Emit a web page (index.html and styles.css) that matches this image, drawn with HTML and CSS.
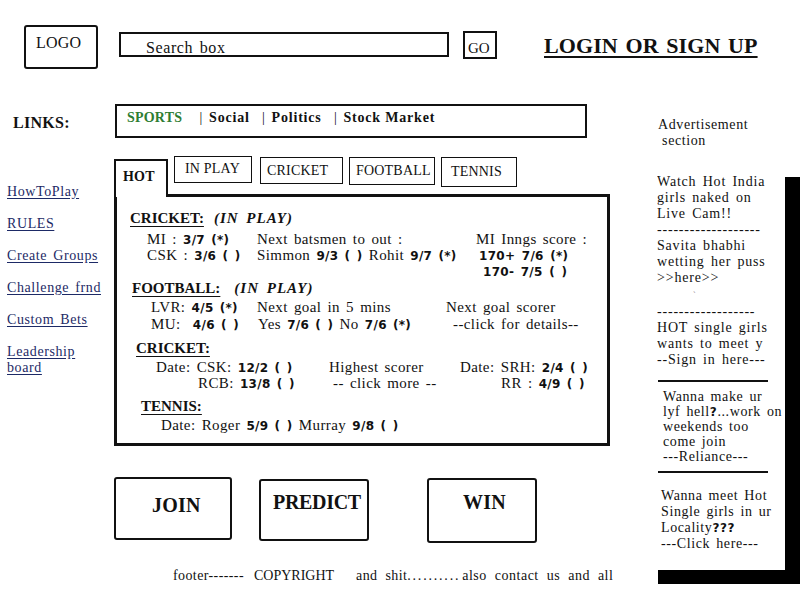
FILE: index.html
```html
<!DOCTYPE html>
<html>
<head>
<meta charset="utf-8">
<link rel="stylesheet" href="styles.css">
</head>
<body>
<header class="header">
  <div class="logo">LOGO</div>
  <div class="search">Search box</div>
  <div class="go">GO</div>
  <a class="login">LOGIN OR SIGN UP</a>
</header>

<div class="layout">
  <aside class="left">
    <div class="links-label">LINKS:</div>
    <nav class="side-links">
      <a>HowToPlay</a>
      <a>RULES</a>
      <a>Create Groups</a>
      <a>Challenge frnd</a>
      <a>Custom Bets</a>
      <a>Leadership<br>board</a>
    </nav>
  </aside>

  <main class="center">
    <div class="topnav">
      <span class="active">SPORTS</span>
      <span class="sep">|</span><span>Social</span>
      <span class="sep">|</span><span>Politics</span>
      <span class="sep">|</span><span>Stock Market</span>
    </div>

    <div class="tabs">
      <div class="tab tab-hot">HOT</div>
      <div class="tab tab-inplay">IN PLAY</div>
      <div class="tab tab-cricket">CRICKET</div>
      <div class="tab tab-football">FOOTBALL</div>
      <div class="tab tab-tennis">TENNIS</div>
    </div>

    <div class="board">
      <h3 class="sec-title t1"><span class="u">CRICKET:</span><em>(IN PLAY)</em></h3>
      <div class="grid g1">
        <span>MI : <b>3/7</b> <b>(*)</b></span>
        <span>Next batsmen to out :</span>
        <span>MI Inngs score :</span>
        <span>CSK : <b>3/6</b> <b>( )</b></span>
        <span>Simmon <b>9/3</b> <b>( )</b> Rohit <b>9/7</b> <b>(*)</b></span>
        <span class="i3"><b>170+ 7/6 (*)</b></span>
        <span></span>
        <span></span>
        <span class="i7"><b>170- 7/5 ( )</b></span>
      </div>

      <h3 class="sec-title t2"><span class="u">FOOTBALL:</span><em>(IN PLAY)</em></h3>
      <div class="grid g2">
        <span>LVR: <b>4/5</b> <b>(*)</b></span>
        <span>Next goal in 5 mins</span>
        <span>Next goal scorer</span>
        <span>MU:&nbsp; <b>4/6</b> <b>( )</b></span>
        <span class="i1">Yes <b>7/6</b> <b>( )</b> No <b>7/6</b> <b>(*)</b></span>
        <span class="i7">--click for details--</span>
      </div>

      <h3 class="sec-title t3"><span class="u">CRICKET:</span></h3>
      <div class="grid g3">
        <span>Date: CSK: <b>12/2</b> <b>( )</b></span>
        <span>Highest scorer</span>
        <span>Date: SRH: <b>2/4</b> <b>( )</b></span>
        <span class="i42">RCB: <b>13/8</b> <b>( )</b></span>
        <span class="i4">-- click more --</span>
        <span class="i41">RR : <b>4/9</b> <b>( )</b></span>
      </div>

      <h3 class="sec-title t4"><span class="u">TENNIS:</span></h3>
      <div class="row-tennis">Date: Roger <b>5/9</b> <b>( )</b> Murray <b>9/8</b> <b>( )</b></div>
    </div>

    <div class="actions">
      <div class="btn btn-join">JOIN</div>
      <div class="btn btn-predict">PREDICT</div>
      <div class="btn btn-win">WIN</div>
    </div>

    <footer class="footer"><span class="f1">footer-------</span><span class="f2">COPYRIGHT</span><span class="f3">and shit<span class="dots">..........</span></span><span class="f4">also contact us and all</span></footer>
  </main>

  <aside class="right">
    <div class="ad-title">Advertisement<br>&nbsp;section</div>
    <div class="ad-box">
      <div class="ad-block b1">
        Watch Hot India<br>
        girls naked on<br>
        Live Cam!!<br>
        -------------------<br>
        Savita bhabhi<br>
        wetting her puss<br>
        &gt;&gt;here&gt;&gt;<br>
        <span class="speck">`</span><br>
        ------------------<br>
        HOT single girls<br>
        wants to meet y<br>
        --Sign in here---
      </div>
      <hr class="ad-rule r1">
      <div class="ad-block b2">
        Wanna make ur<br>
        lyf hell<b>?</b>...work on<br>
        weekends too<br>
        come join<br>
        ---Reliance---
      </div>
      <hr class="ad-rule r2">
      <div class="ad-block b3">
        Wanna meet Hot<br>
        Single girls in ur<br>
        Locality<b>???</b><br>
        ---Click here---
      </div>
    </div>
  </aside>
</div>
</body>
</html>
```

FILE: styles.css
```css
* { box-sizing: border-box; }

html, body {
  margin: 0;
  padding: 0;
  background: #fff;
}

body {
  width: 800px;
  height: 600px;
  overflow: hidden;
  font-family: "Liberation Serif", "Times New Roman", serif;
  font-size: 14px;
  color: #111;
}

/* ---------- header ---------- */
.header {
  display: flex;
  align-items: flex-start;
  padding: 25px 0 0 24px;
  height: 104px;
}

.logo {
  width: 74px;
  height: 44px;
  border: 2px solid #111;
  border-radius: 3px;
  padding: 7px 0 0 10px;
  font-size: 16px;
  letter-spacing: 0.2px;
}

.search {
  margin: 7px 0 0 21px;
  width: 330px;
  height: 25px;
  border: 2px solid #111;
  padding: 5px 0 0 25px;
  font-size: 16px;
  line-height: 18px;
  letter-spacing: 0.6px;
  word-spacing: 2px;
}

.go {
  margin: 6px 0 0 14px;
  width: 34px;
  height: 28px;
  border: 2px solid #111;
  padding: 7px 0 0 3px;
  font-size: 15px;
  line-height: 16px;
}

.login {
  margin: 9px 0 0 47px;
  font-weight: bold;
  font-size: 22px;
  line-height: 24px;
  text-decoration: underline;
  text-decoration-thickness: 2px;
  text-underline-offset: 3px;
  letter-spacing: 0.1px;
  word-spacing: 2px;
  color: #111;
}

/* ---------- layout ---------- */
.layout {
  display: grid;
  grid-template-columns: 114px 529px 1fr;
}

/* ---------- left ---------- */
.left {
  padding-top: 11px;
}

.links-label {
  padding-left: 13px;
  font-weight: bold;
  font-size: 16px;
  line-height: 16px;
  letter-spacing: 0.3px;
}

.side-links {
  display: flex;
  flex-direction: column;
  gap: 16px;
  margin-top: 53px;
  padding-left: 7px;
}

.side-links a {
  color: #1d2a66;
  text-decoration: underline;
  text-underline-offset: 2px;
  font-size: 14px;
  line-height: 16px;
  letter-spacing: 0.6px;
  word-spacing: 2px;
}

/* ---------- center ---------- */
.center {
  display: flex;
  flex-direction: column;
  align-items: flex-start;
}

.topnav {
  margin-left: 1px;
  width: 472px;
  height: 34px;
  border: 2px solid #111;
  padding: 4px 0 0 10px;
  font-weight: bold;
  font-size: 14px;
  line-height: 16px;
  letter-spacing: 0.8px;
  white-space: nowrap;
}

.topnav .active { color: #2e7d32; margin-right: 5px; letter-spacing: 0.2px; }
.topnav .sep { margin: 0 6px 0 8px; font-weight: normal; }

.tabs {
  display: flex;
  align-items: flex-start;
  margin-top: 18px;
}

.tab {
  border: 1px solid #111;
  font-size: 14px;
  line-height: 16px;
  letter-spacing: 0.2px;
  background: #fff;
}

.tab-hot {
  position: relative;
  z-index: 1;
  margin-top: 3px;
  margin-bottom: -3px;
  width: 54px;
  height: 38px;
  border: 2px solid #111;
  border-bottom: none;
  padding: 8px 0 0 7px;
  font-weight: bold;
}

.tab-inplay { margin-left: 6px; width: 78px; height: 27px; padding: 4px 0 0 10px; }
.tab-cricket { margin-left: 8px; margin-top: 1px; width: 83px; height: 27px; padding: 5px 0 0 6px; }
.tab-football { margin-left: 6px; margin-top: 1px; width: 86px; height: 28px; padding: 5px 0 0 6px; }
.tab-tennis { margin-left: 6px; margin-top: 1px; width: 76px; height: 30px; padding: 6px 0 0 9px; }

.board {
  width: 496px;
  height: 252px;
  border: 3px solid #111;
  font-size: 15px;
  line-height: 16px;
  letter-spacing: 0.4px;
  word-spacing: 2px;
}

.board b {
  font-family: "DejaVu Sans", sans-serif;
  font-weight: bold;
  font-size: 12px;
  line-height: 12px;
  letter-spacing: 0.3px;
}

.sec-title {
  margin: 0;
  height: 16px;
  font-size: 15px;
  line-height: 16px;
  font-weight: bold;
  letter-spacing: 0;
}

.sec-title .u {
  text-decoration: underline;
  text-decoration-thickness: 1px;
  text-underline-offset: 3px;
}

.sec-title em {
  margin-left: 10px;
  font-style: italic;
  letter-spacing: 1px;
  word-spacing: 3px;
}

.t1 { margin-top: 13px; padding-left: 13px; }
.t2 { margin-top: 1px; padding-left: 15px; }
.t2 em { margin-left: 14px; }
.t3 { margin-top: 9px; padding-left: 19px; }
.t4 { margin-top: 7px; padding-left: 24px; }

.grid {
  display: grid;
  grid-auto-rows: 16px;
  margin-top: 5px;
  white-space: nowrap;
}

.g1 { padding-left: 30px; grid-template-columns: 110px 219px auto; }
.g2 { margin-top: 3px; padding-left: 34px; grid-template-columns: 106px 189px auto; }
.g2 > span:nth-child(n+4) { padding-top: 1px; }
.g3 { margin-top: 3px; padding-left: 39px; grid-template-columns: 173px 131px auto; }

.i1 { padding-left: 1px; }
.i3 { padding-left: 3px; }
.i4 { padding-left: 4px; }
.i7 { padding-left: 7px; }
.i41 { padding-left: 41px; }
.i42 { padding-left: 42px; }

.row-tennis {
  height: 16px;
  margin-top: 3px;
  padding-left: 44px;
  white-space: nowrap;
}

.actions {
  display: flex;
  align-items: flex-start;
  margin-top: 31px;
}

.btn {
  border: 2px solid #111;
  border-radius: 3px;
  font-weight: bold;
  font-size: 20px;
  line-height: 20px;
  letter-spacing: 0.2px;
}

.btn-join { width: 118px; height: 63px; padding: 16px 0 0 36px; }
.btn-predict { margin-left: 27px; margin-top: 2px; width: 110px; height: 62px; padding: 11px 0 0 12px; letter-spacing: -0.3px; }
.btn-win { margin-left: 58px; margin-top: 1px; width: 110px; height: 65px; padding: 12px 0 0 34px; }

.footer {
  display: flex;
  margin-top: 25px;
  padding-left: 59px;
  font-size: 14px;
  line-height: 16px;
  letter-spacing: 0.4px;
  word-spacing: 4px;
  white-space: nowrap;
}

.f2 { margin-left: 10px; letter-spacing: 0; }
.f3 { margin-left: 22px; }
.dots { letter-spacing: 1.8px; }
.f4 { margin-left: 2px; letter-spacing: 0.5px; word-spacing: 4px; }

/* ---------- right ---------- */
.right {
  padding-top: 13px;
}

.ad-title {
  padding-left: 15px;
  font-size: 14px;
  line-height: 16px;
  letter-spacing: 0.6px;
}

.ad-box {
  margin-top: 14px;
  width: 142px;
  height: 407px;
  background: #fff;
  box-shadow: 15px 14px 0 #000;
  padding: 11px 0 0 14px;
  white-space: nowrap;
  font-size: 14px;
  letter-spacing: 0.8px;
  word-spacing: 2px;
}

.ad-block { line-height: 16px; }
.ad-block b { font-family: "DejaVu Sans", sans-serif; font-size: 12px; line-height: 12px; }
.b1 { width: 112px; overflow: hidden; }
.b2 { line-height: 15px; margin-top: 7px; padding-left: 6px; letter-spacing: 0.6px; }
.b3 { margin-top: 15px; padding-left: 4px; letter-spacing: 0.6px; }

.speck { padding-left: 36px; font-size: 8px; color: #888; }

.ad-rule {
  margin: 0;
  border: none;
  border-top: 2px solid #111;
  width: 110px;
  margin-left: 1px;
}

.r1 { margin-top: 12px; }
.r2 { margin-top: 7px; }
```
